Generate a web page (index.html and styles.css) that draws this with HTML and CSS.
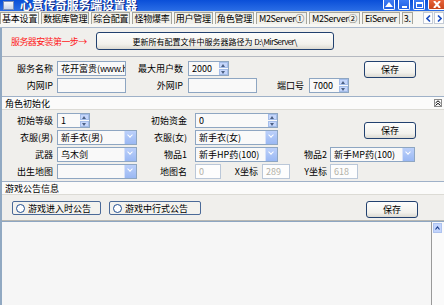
FILE: index.html
```html
<!DOCTYPE html>
<html lang="zh-CN">
<head>
    <meta charset="UTF-8">
    <title>心意传奇服务端设置器</title>
    <link rel="stylesheet" href="styles.css">
</head>
<body>
    <!-- Window title -->
    <div class="titlebar">
        <span class="app-icon"></span>
        <span class="title">心意传奇服务端设置器</span>
        <div class="win-btns">
            <span class="win-btn">
                <svg width="8" height="5" viewBox="0 0 8 5"><path d="M0 5 L4 0 L8 5 Z" fill="#fff"/></svg>
            </span>
            <span class="win-btn"><i class="min-bar"></i></span>
            <span class="win-btn"><i class="max-box"></i></span>
            <span class="win-btn close">
                <svg width="8" height="7" viewBox="0 0 8 7"><path d="M1 0 L7 7 M7 0 L1 7" stroke="#fff" stroke-width="2"/></svg>
            </span>
        </div>
    </div>

    <!-- Tabs -->
    <div class="tabbar">
        <div class="tabs">
            <span class="tab active">基本设置</span>
            <span class="tab">数据库管理</span>
            <span class="tab">综合配置</span>
            <span class="tab">怪物爆率</span>
            <span class="tab">用户管理</span>
            <span class="tab">角色管理</span>
            <span class="tab latin">M2Server①</span>
            <span class="tab latin">M2Server②</span>
            <span class="tab latin">EiServer</span>
            <span class="tab">3.</span>
        </div>
        <div class="tab-arrows">
            <span class="tab-arrow">
                <svg width="5" height="7" viewBox="0 0 5 7"><path d="M4 0.5 L1 3.5 L4 6.5" fill="none" stroke="#1d4fc0" stroke-width="1.6"/></svg>
            </span>
            <span class="tab-arrow">
                <svg width="5" height="7" viewBox="0 0 5 7"><path d="M1 0.5 L4 3.5 L1 6.5" fill="none" stroke="#1d4fc0" stroke-width="1.6"/></svg>
            </span>
        </div>
    </div>

    <div class="page">
        <div class="step-row">
            <span class="step-tip">服务器安装第一步→</span>
            <button class="btn path-btn">更新所有配置文件中服务器路径为 <span class="latin">D:\MirServer\</span></button>
        </div>

        <!-- Server -->
        <div class="group server-grid">
            <span class="lbl c1">服务名称</span>
            <span class="field w69">花开富贵(<span class="latin">www.hk</span></span>
            <span class="lbl c3">最大用户数</span>
            <span class="field spin w41"><span class="val">2000</span><span class="spin-btns"><i class="up"></i><i class="down"></i></span></span>
            <button class="btn save save-1">保存</button>

            <span class="lbl c1">内网IP</span>
            <span class="field w69"></span>
            <span class="lbl c3">外网IP</span>
            <span class="field w69"></span>
            <span class="lbl c5">端口号</span>
            <span class="field spin w40"><span class="val">7000</span><span class="spin-btns"><i class="up"></i><i class="down"></i></span></span>
        </div>

        <div class="section-head">
            <span>角色初始化</span>
            <span class="fold">
                <svg width="6" height="6" viewBox="0 0 6 6"><path d="M0.5 3 L3 0.8 L5.5 3 M0.5 5.5 L3 3.3 L5.5 5.5" fill="none" stroke="#000" stroke-width="1"/></svg>
            </span>
        </div>

        <!-- Role init -->
        <div class="group role-grid">
            <span class="lbl c1">初始等级</span>
            <span class="field spin w33"><span class="val">1</span><span class="spin-btns"><i class="up"></i><i class="down"></i></span></span>
            <span class="lbl c3">初始资金</span>
            <span class="field spin w83"><span class="val">0</span><span class="spin-btns"><i class="up"></i><i class="down"></i></span></span>
            <button class="btn save save-2">保存</button>

            <span class="lbl c1">衣服(男)</span>
            <span class="combo w80"><span class="val">新手衣(男)</span><span class="drop"></span></span>
            <span class="lbl c3">衣服(女)</span>
            <span class="combo w83"><span class="val">新手衣(女)</span><span class="drop"></span></span>

            <span class="lbl c1">武器</span>
            <span class="combo w80"><span class="val">乌木剑</span><span class="drop"></span></span>
            <span class="lbl c3">物品1</span>
            <span class="combo w83"><span class="val">新手HP药(100)</span><span class="drop"></span></span>
            <span class="lbl c5">物品2</span>
            <span class="combo w85"><span class="val">新手MP药(100)</span><span class="drop"></span></span>

            <span class="lbl c1">出生地图</span>
            <span class="combo w80"><span class="val"></span><span class="drop"></span></span>
            <span class="lbl c3">地图名</span>
            <span class="coords">
                <span class="field off w26">0</span>
                <span class="lbl grow">X坐标</span>
                <span class="field off w28">289</span>
            </span>
            <span class="lbl c5">Y坐标</span>
            <span class="field off w28">618</span>
        </div>

        <div class="section-head">
            <span>游戏公告信息</span>
        </div>

        <!-- Notice -->
        <div class="group notice-row">
            <label class="radio-box w89"><i class="radio"></i>游戏进入时公告</label>
            <label class="radio-box w92"><i class="radio"></i>游戏中行式公告</label>
            <button class="btn save save-3">保存</button>
        </div>

        <div class="memo">
            <div class="memo-text"></div>
            <div class="vscroll">
                <span class="scroll-up">
                    <svg width="5" height="4" viewBox="0 0 5 4"><path d="M0.5 3.5 L2.5 1 L4.5 3.5" fill="none" stroke="#1d3f8a" stroke-width="1.2"/></svg>
                </span>
            </div>
        </div>
    </div>
</body>
</html>
```

FILE: styles.css
```css
/* General */
* {
    box-sizing: border-box;
}

body {
    margin: 0;
    width: 444px;
    height: 305px;
    overflow: hidden;
    background-color: #f0efec;
    color: #000;
    font-family: "Noto Sans CJK SC", "Noto Sans", sans-serif;
    font-size: 9px;
}

.latin {
    letter-spacing: -0.4px;
}

/* Title bar */
.titlebar {
    height: 11px;
    display: flex;
    align-items: flex-end;
    background: linear-gradient(#0a4fd8, #2b6ee6);
    overflow: hidden;
}

.app-icon {
    width: 11px;
    height: 9px;
    margin: 0 6px 1px 3px;
    background: linear-gradient(#f4f6fb, #c8d3e8);
    border: 1px solid #7c8fb8;
}

.title {
    color: white;
    font-size: 12px;
    font-weight: bold;
    line-height: 12px;
    letter-spacing: -0.3px;
    text-shadow: 1px 1px #0b237a;
    white-space: nowrap;
}

.win-btns {
    margin-left: auto;
    display: flex;
    gap: 3px;
    align-self: flex-start;
    margin-right: -1px;
}

.win-btn {
    width: 12px;
    height: 10px;
    display: flex;
    align-items: center;
    justify-content: center;
    background: linear-gradient(#3d7cf4, #2261e3);
    border: 1px solid #fff;
    border-top: none;
    border-radius: 0 0 2px 2px;
}

.win-btn.close {
    width: 17px;
    background: linear-gradient(#e8653c, #c94419);
}

.min-bar {
    width: 5px;
    height: 2px;
    background: white;
    margin-top: 4px;
}

.max-box {
    width: 7px;
    height: 6px;
    border: 1px solid white;
    border-top-width: 2px;
}

/* Tabs */
.tabbar {
    height: 17px;
    display: flex;
    align-items: flex-end;
    padding-bottom: 3px;
    background-color: #f7f7f4;
    border-top: 1px solid #dcdcd6;
    border-bottom: 1px solid #a9b8cb;
}

.tabs {
    flex: 1;
    display: flex;
    gap: 2px;
    overflow: hidden;
}

.tab {
    flex-shrink: 0;
    height: 12px;
    line-height: 11px;
    padding: 0 1px;
    border: 1px solid #a6a69c;
    border-bottom: none;
    background-color: #f1f0ea;
    white-space: nowrap;
    letter-spacing: -0.2px;
}

.tab.latin {
    padding: 0 2px;
    letter-spacing: -0.4px;
}

.tab.active {
    background-color: #fbfbf9;
}

.tab-arrows {
    display: flex;
    gap: 1px;
}

.tab-arrow {
    width: 10px;
    height: 12px;
    display: flex;
    align-items: center;
    justify-content: center;
    background-color: #fff;
    border: 1px solid #c4cbd6;
}

/* Page */
.page {
    height: 277px;
    display: flex;
    flex-direction: column;
    border-left: 2px solid #91a9c2;
}

.step-row {
    height: 29px;
    display: flex;
    align-items: center;
    gap: 9px;
    padding-left: 9px;
    padding-bottom: 2px;
    border-bottom: 1px solid #b4b8c0;
}

.step-tip {
    color: #ff1a1a;
    letter-spacing: -0.6px;
}

/* Buttons */
.btn {
    font-family: inherit;
    font-size: 9px;
    color: #000;
    padding: 0;
    border: 1px solid #22416f;
    border-radius: 3px;
    background: linear-gradient(#fdfdfc, #f2f1ec 70%, #dcdad2);
    cursor: pointer;
}

.path-btn {
    width: 238px;
    height: 18px;
    font-size: 8px;
}

.path-btn .latin {
    letter-spacing: -0.6px;
}

.save {
    width: 52px;
    height: 17px;
}

/* Fields */
.lbl {
    line-height: 15px;
    text-align: right;
    white-space: nowrap;
}

.lbl.c1 {
    grid-column: 1;
    padding-right: 4px;
}

.lbl.c3 {
    grid-column: 3;
}

.lbl.c5 {
    grid-column: 5;
}

.field,
.combo {
    height: 15px;
    line-height: 13px;
    border: 1px solid #8ea6c2;
    background-color: #f9f9f9;
    white-space: nowrap;
    overflow: hidden;
}

.field {
    padding-left: 3px;
}

.field.off {
    color: #b2b0a6;
    border-color: #bac7d8;
    background-color: #fdfdfd;
}

.spin,
.combo {
    display: flex;
}

.spin .val,
.combo .val {
    flex: 1;
    overflow: hidden;
}

.combo .val {
    padding-left: 3px;
}

.spin-btns {
    width: 9px;
    display: flex;
    flex-direction: column;
    gap: 1px;
}

.spin-btns i {
    flex: 1;
    background-color: #c5d6fb;
    border: 1px solid #a4bde9;
    position: relative;
}

.spin-btns i::after {
    content: "";
    position: absolute;
    left: 1px;
    top: 1px;
    border-left: 2.5px solid transparent;
    border-right: 2.5px solid transparent;
}

.spin-btns .up::after {
    border-bottom: 3px solid #4d6185;
}

.spin-btns .down::after {
    border-top: 3px solid #4d6185;
}

.drop {
    width: 12px;
    background: linear-gradient(#bcd0fa, #9ab8f3);
    border-left: 1px solid #d6e1f8;
    position: relative;
}

.drop::after {
    content: "";
    position: absolute;
    left: 3px;
    top: 2px;
    width: 3px;
    height: 3px;
    border-right: 1.5px solid #fff;
    border-bottom: 1.5px solid #fff;
    transform: rotate(45deg);
}

.w26 { width: 26px; }
.w28 { width: 28px; }
.w33 { width: 33px; }
.w40 { width: 40px; }
.w41 { width: 41px; }
.w69 { width: 69px; }
.w80 { width: 80px; }
.w83 { width: 83px; }
.w85 { width: 85px; }

/* Server group */
.server-grid {
    display: grid;
    grid-template-columns: 55px 69px 62px 69px 52px 40px 67px;
    grid-template-rows: 15px 15px;
    row-gap: 2px;
    padding: 4px 0 2px;
    height: 39px;
}

.server-grid .c3,
.server-grid .c5 {
    padding-right: 5px;
}

.save-1 {
    grid-column: 7;
    grid-row: 1;
    justify-self: end;
}

/* Section headers */
.section-head {
    height: 14px;
    display: flex;
    align-items: center;
    justify-content: space-between;
    padding: 0 2px 0 3px;
    background-color: #fbfbfa;
    border-top: 1px solid #9fb1c8;
    border-bottom: 1px solid #dcdbd5;
}

.fold {
    width: 8px;
    height: 8px;
    display: flex;
    align-items: center;
    justify-content: center;
    border: 1px solid #8a8a8a;
    background-color: #fff;
}

/* Role group */
.role-grid {
    display: grid;
    grid-template-columns: 55px 80px 58px 95px 40px 85px;
    grid-auto-rows: 15px;
    row-gap: 2px;
    padding: 3px 0 2px;
    height: 71px;
}

.role-grid .c3 {
    padding-right: 8px;
}

.role-grid .c5 {
    padding-right: 3px;
}

.save-2 {
    grid-column: 6;
    grid-row: 1 / span 2;
    justify-self: end;
    align-self: center;
    margin: 3px -1px 0 0;
}

.coords {
    display: flex;
}

.coords .grow {
    flex: 1;
    padding-right: 4px;
}

/* Notice group */
.notice-row {
    height: 26px;
    display: flex;
    align-items: flex-start;
    gap: 8px;
    padding: 6px 0 0 10px;
    border-bottom: 1px solid #b7b7b2;
}

.radio-box {
    height: 14px;
    display: flex;
    align-items: center;
    gap: 3px;
    padding-left: 3px;
    border: 1px solid #4b6a98;
    border-radius: 2px;
    background-color: #f3f2ee;
}

.w89 { width: 89px; }
.w92 { width: 92px; }

.radio {
    width: 9px;
    height: 9px;
    border: 1px solid #1f4c8f;
    border-radius: 50%;
    background-color: #fff;
}

.save-3 {
    margin-left: auto;
    margin-right: 26px;
}

/* Memo */
.memo {
    flex: 1;
    display: flex;
    border-top: 1px solid #8ea6c2;
}

.memo-text {
    flex: 1;
    background-color: #f6f6f6;
    border-right: 1px solid #9a9a9a;
}

.vscroll {
    width: 12px;
    padding: 1px 2px 0 1px;
    background-color: #fafafa;
}

.scroll-up {
    height: 10px;
    display: flex;
    align-items: center;
    justify-content: center;
    background-color: #c3d4fc;
    border: 1px solid #aec3ef;
}
```
